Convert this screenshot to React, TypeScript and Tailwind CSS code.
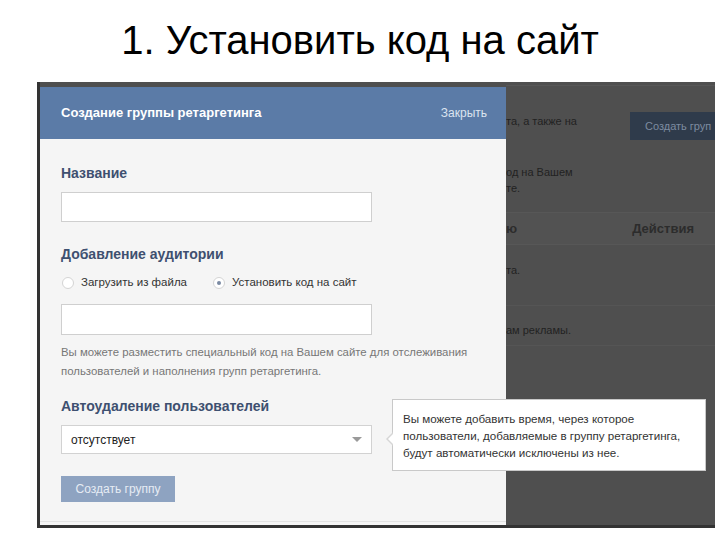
import React from "react";

const ui = { fontFamily: '"Liberation Sans", Arial, sans-serif' };

function Radio({ checked, label }: { checked?: boolean; label: string }) {
  return (
    <label className="flex items-center gap-[7px] text-[11.5px] text-[#333]">
      <span className="flex h-[12px] w-[12px] items-center justify-center rounded-full border border-[#d4d4d4] bg-white">
        {checked && <span className="h-[4px] w-[4px] rounded-full bg-[#7a8aa2]" />}
      </span>
      {label}
    </label>
  );
}

function BackgroundPage() {
  return (
    <div className="flex h-full flex-col pl-[466px] text-[11px] leading-[16px] text-[#222]">
      <div className="h-[4px] border-b border-[#575757]" />
      <div className="mt-[26px] flex h-[28px] items-start justify-between">
        <span className="mt-[1px]">та, а также на</span>
        <span className="flex h-[28px] w-[85px] items-center bg-[#2f3b4b] pl-[15px] text-[11px] text-[#7d8ba0]">
          Создать груп
        </span>
      </div>
      <div className="mt-[24px]">
        <div>од на Вашем</div>
        <div>те.</div>
      </div>
      <div className="mt-[16px] flex h-[33px] items-center justify-between border-y border-[#575757] bg-[#525252] pr-[21px] text-[13px] font-bold text-[#2c2c2c]">
        <span>ю</span>
        <span>Действия</span>
      </div>
      <div className="mt-[17px]">та.</div>
      <div className="mt-[27px] border-b border-[#555]" />
      <div className="mt-[16px]">ам рекламы.</div>
      <div className="mt-[7px] border-b border-[#555]" />
    </div>
  );
}

function Modal() {
  return (
    <div className="absolute left-0 top-[5px] flex h-[438px] w-[466px] flex-col bg-[#f5f5f5]">
      <div className="flex h-[52px] shrink-0 items-center justify-between bg-[#5b7ba7] pl-[21px] pr-[19px]">
        <span className="text-[13px] font-bold text-white">Создание группы ретаргетинга</span>
        <span className="text-[12px] text-[#dbe4f0]">Закрыть</span>
      </div>
      <div className="flex flex-1 flex-col px-[21px]">
        <div className="mt-[26px] text-[14px] font-bold leading-[16px] text-[#3e5070]">Название</div>
        <div className="mt-[11px] h-[30px] w-[311px] border border-[#cfcfcf] bg-white" />
        <div className="mt-[24px] text-[14px] font-bold leading-[16px] text-[#3e5070]">Добавление аудитории</div>
        <div className="mt-[13px] flex h-[16px] items-center gap-[26px] pl-[1px]">
          <Radio label="Загрузить из файла" />
          <Radio checked label="Установить код на сайт" />
        </div>
        <div className="mt-[13px] h-[31px] w-[311px] border border-[#cfcfcf] bg-white" />
        <div className="mt-[8px] text-[11.4px] leading-[19px] text-[#777]">
          <div>Вы можете разместить специальный код на Вашем сайте для отслеживания</div>
          <div>пользователей и наполнения групп ретаргетинга.</div>
        </div>
        <div className="mt-[17px] text-[14px] font-bold leading-[16px] text-[#3e5070]">Автоудаление пользователей</div>
        <div className="mt-[11px] flex h-[29px] w-[311px] items-center justify-between border border-[#d2d2d2] bg-white pl-[9px] pr-[9px] text-[12px] text-[#222]">
          <span>отсутствует</span>
          <span className="h-0 w-0 border-x-[5px] border-t-[5px] border-x-transparent border-t-[#9a9a9a]" />
        </div>
        <div className="mt-[22px] flex h-[26px] w-[114px] items-center justify-center bg-[#8ea3c1] text-[12px] text-[#e6ecf4]">
          Создать группу
        </div>
      </div>
      <div className="mb-[3px] border-t border-[#e2e2e2]" />
    </div>
  );
}

function Tooltip() {
  return (
    <div className="absolute left-[352px] top-[317px] h-[72px] w-[314px] border border-[#c9c9c9] bg-white pl-[10px] pt-[10px] text-[11.6px] leading-[17px] text-[#333]">
      <span className="absolute left-[-7px] top-[32px] h-0 w-0 border-y-[7px] border-r-[7px] border-y-transparent border-r-[#d6d6d6]" />
      <span className="absolute left-[-5px] top-[33px] h-0 w-0 border-y-[6px] border-r-[6px] border-y-transparent border-r-white" />
      <div>Вы можете добавить время, через которое</div>
      <div>пользователи, добавляемые в группу ретаргетинга,</div>
      <div>будут автоматически исключены из нее.</div>
    </div>
  );
}

export default function App() {
  return (
    <div className="flex h-[540px] w-[720px] flex-col bg-white" style={ui}>
      <div className="flex h-[82px] items-center justify-center pb-[2px]">
        <h1 className="text-[40px] leading-[46px] text-black">1. Установить код на сайт</h1>
      </div>
      <div className="relative ml-[37px] h-[446px] w-[678px] overflow-hidden border-b-[3px] border-l-[3px] border-[#333] bg-[#4f4f4f]">
        <BackgroundPage />
        <Modal />
        <Tooltip />
      </div>
    </div>
  );
}
